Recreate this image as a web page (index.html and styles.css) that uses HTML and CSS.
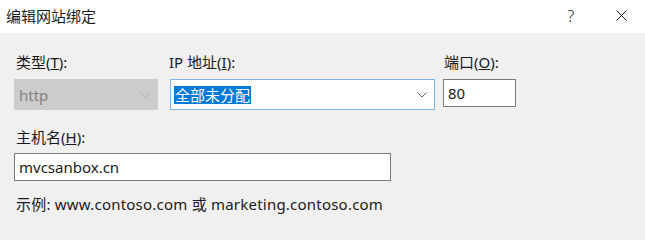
FILE: index.html
```html
<!DOCTYPE html>
<html lang="zh-CN">
<head>
<meta charset="utf-8">
<title>编辑网站绑定</title>
<link rel="stylesheet" href="styles.css">
</head>
<body>
<div class="dialog">
  <div class="titlebar">
    <span class="title">编辑网站绑定</span>
    <div class="title-buttons">
      <span class="help">?</span>
      <svg class="close" width="11" height="11" viewBox="0 0 11 11"><path d="M0.5 0.5 L10.5 10.5 M10.5 0.5 L0.5 10.5" stroke="#1a1a1a" stroke-width="1" fill="none"/></svg>
    </div>
  </div>
  <div class="content">
    <div class="row">
      <div class="field col-type">
        <label class="label">类型(<u>T</u>):</label>
        <div class="combo disabled">
          <span class="value">http</span>
          <svg class="chev" width="10" height="6" viewBox="0 0 10 6"><path d="M0.5 0.5 L5 5 L9.5 0.5" stroke="#b4b4b4" stroke-width="1" fill="none"/></svg>
        </div>
      </div>
      <div class="field col-ip">
        <label class="label">IP 地址(<u>I</u>):</label>
        <div class="combo focused">
          <span class="value selected">全部未分配</span>
          <svg class="chev" width="10" height="6" viewBox="0 0 10 6"><path d="M0.5 0.5 L5 5 L9.5 0.5" stroke="#606060" stroke-width="1" fill="none"/></svg>
        </div>
      </div>
      <div class="field col-port">
        <label class="label">端口(<u>O</u>):</label>
        <div class="textbox port">80</div>
      </div>
    </div>
    <div class="field host">
      <label class="label">主机名(<u>H</u>):</label>
      <div class="textbox hostbox">mvcsanbox.cn</div>
    </div>
    <div class="example">示例: www.contoso.com 或 marketing.contoso.com</div>
  </div>
</div>
</body>
</html>
```
FILE: styles.css
```css
html, body {
  margin: 0;
  padding: 0;
  background: #f0f0f0;
}
.dialog {
  width: 645px;
  height: 227px;
  font-family: "Noto Sans", "Noto Sans CJK SC", sans-serif;
  font-size: 15px;
  color: #1a1a1a;
  background: #f0f0f0;
  overflow: hidden;
}
.titlebar {
  height: 33px;
  background: #ffffff;
  display: flex;
  align-items: center;
  justify-content: space-between;
  padding-left: 6px;
  box-sizing: border-box;
}
.title {
  font-size: 15px;
  line-height: 20px;
  margin-top: -2px;
}
.title-buttons {
  display: flex;
  align-items: center;
  margin-top: -2px;
}
.help {
  font-size: 16px;
  font-weight: 300;
  color: #1a1a1a;
  width: 46px;
  text-align: center;
  margin-right: 13px;
}
.close {
  margin-right: 18px;
  margin-left: 9px;
}
.content {
  padding: 19px 0 0 14px;
}
.row {
  display: flex;
  align-items: flex-start;
}
.field {
  display: flex;
  flex-direction: column;
}
.label {
  line-height: 20px;
  height: 20px;
  margin-left: 2px;
  margin-bottom: 7px;
}
.col-type { width: 144px; margin-right: 12px; }
.col-ip { width: 265px; margin-right: 8px; }
.col-ip .label { margin-left: -1px; }
.col-port { width: 73px; }
.col-port .label { margin-left: 1px; }
.combo {
  height: 31px;
  box-sizing: border-box;
  display: flex;
  align-items: center;
  justify-content: space-between;
  padding: 0 7px 0 3px;
}
.combo.disabled {
  background: #cccccc;
  border: 1px solid #cccccc;
  color: #838383;
}
.combo.focused {
  background: #ffffff;
  border: 1px solid #7eb4ea;
}
.value {
  line-height: 18px;
  padding: 0 1px;
}
.selected {
  background: #0078d7;
  color: #ffffff;
}
.chev {
  margin-top: 1px;
}
.textbox {
  background: #ffffff;
  border: 1px solid #7a7a7a;
  box-sizing: border-box;
  height: 28px;
  line-height: 26px;
  padding-left: 4px;
}
.host {
  margin-top: 17px;
}
.host .label {
  margin-bottom: 6px;
}
.hostbox {
  width: 377px;
}
.example {
  margin-top: 13px;
  margin-left: 2px;
  line-height: 20px;
  letter-spacing: 0.22px;
}
```
